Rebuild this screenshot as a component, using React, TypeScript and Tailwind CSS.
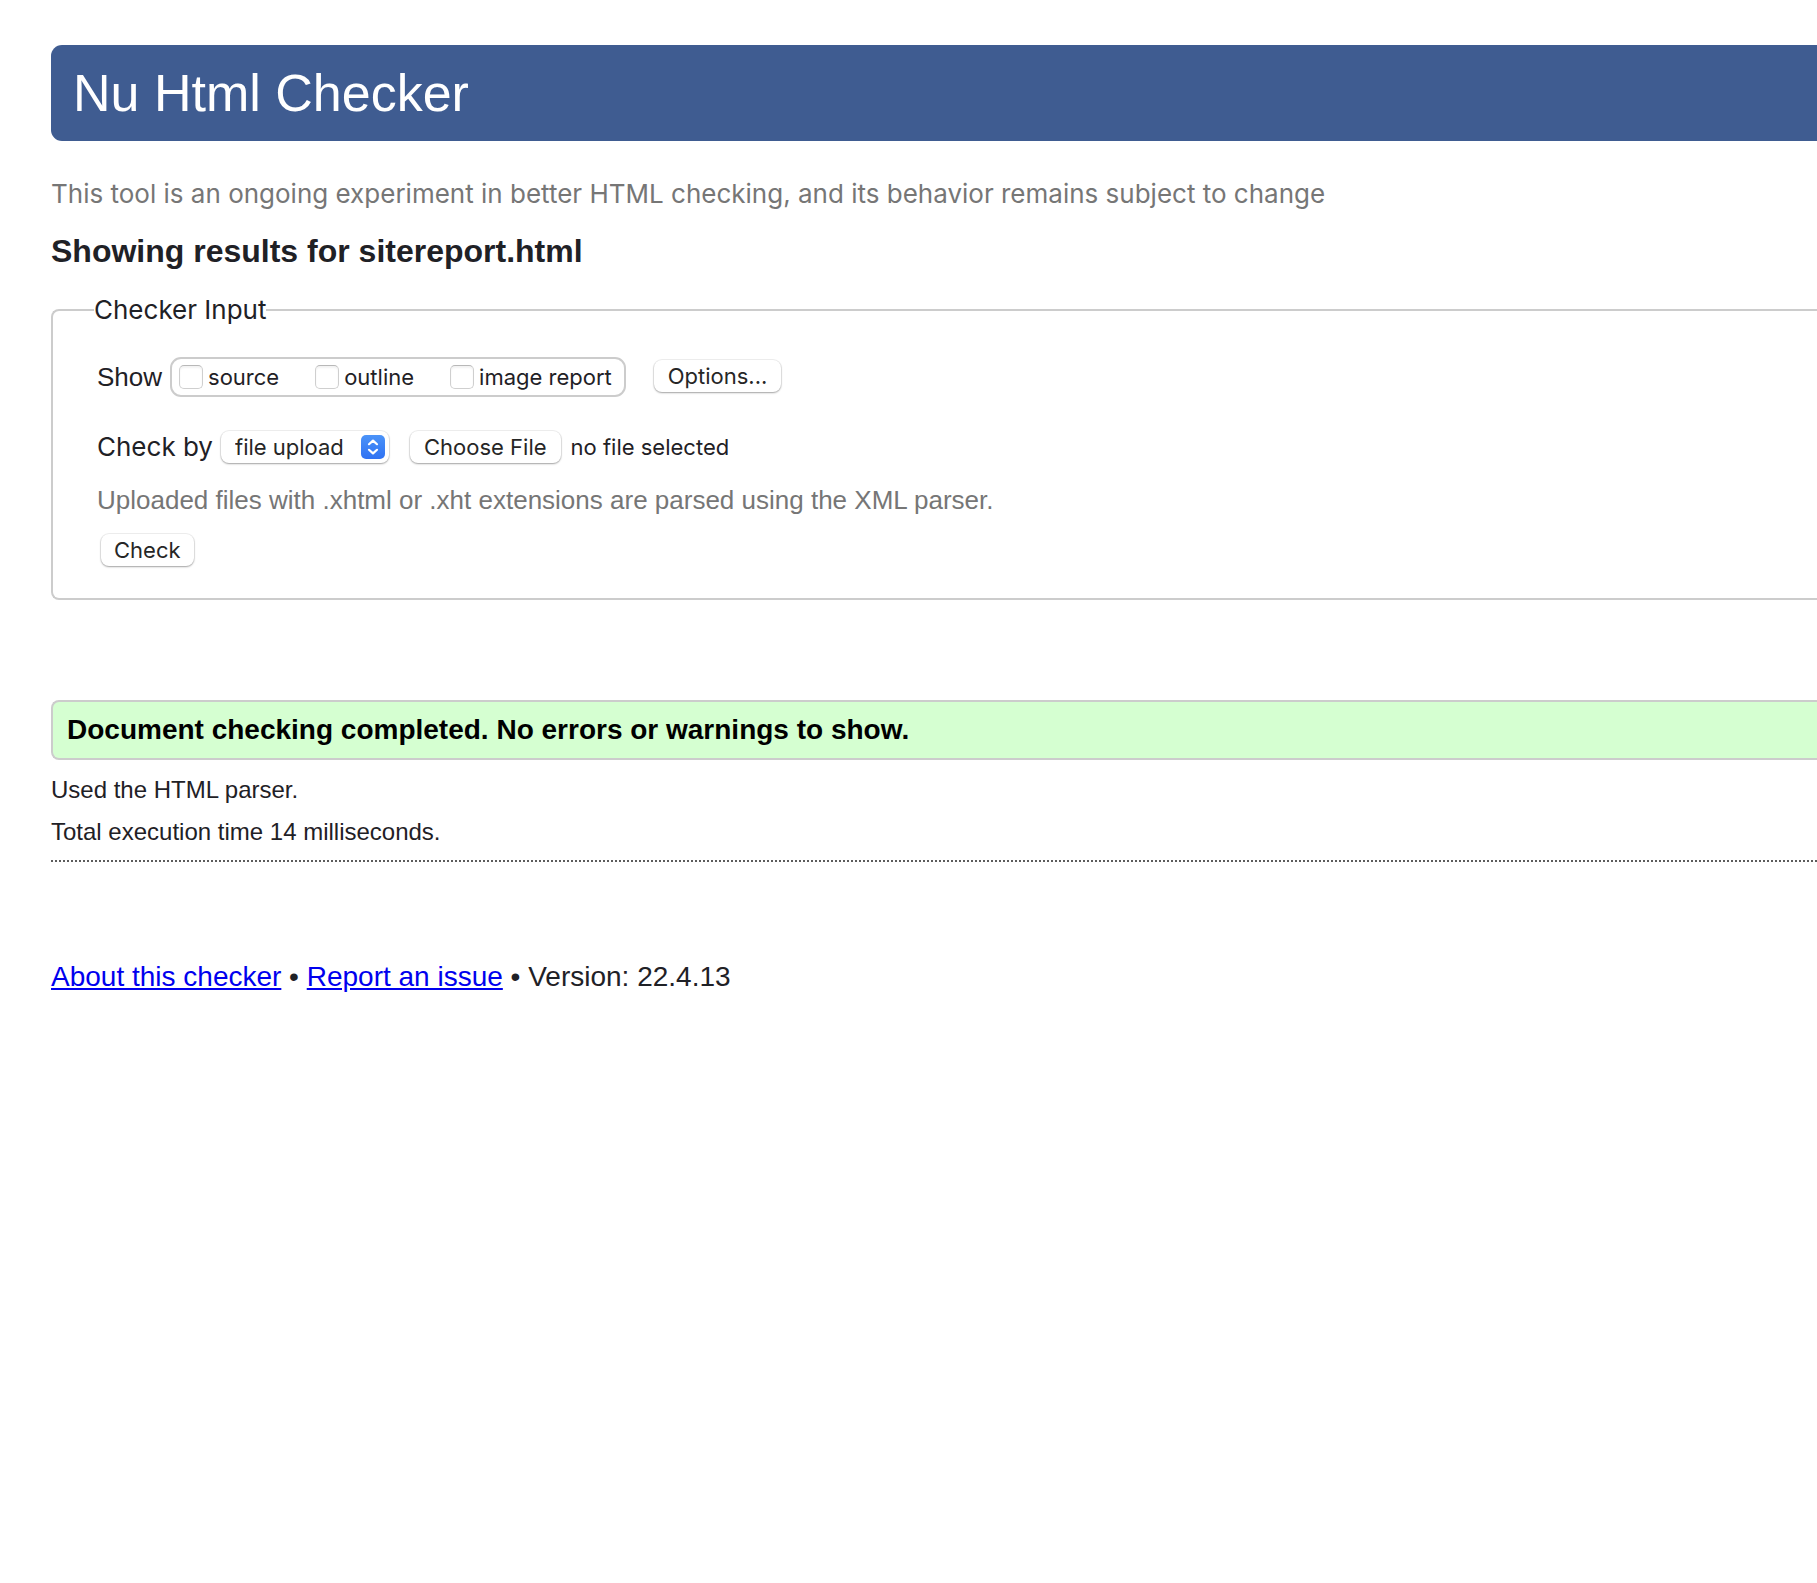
import { useState } from "react";

const sans = "font-['Liberation_Sans',Arial,sans-serif]";
const ui = "font-['Inter',sans-serif]";
const raised =
  "rounded-lg bg-white shadow-[0_0_0_1px_rgba(0,0,0,0.06),0_1px_2px_rgba(0,0,0,0.32)] text-[#262626] text-[22px] leading-[32px] font-['Inter',sans-serif]";

function Tick({ label }: { label: string }) {
  return (
    <label className="flex items-center gap-[5px]">
      <input
        type="checkbox"
        className="size-6 appearance-none rounded-[5px] border border-[#cfcfcf] border-t-[#b8b8b8] bg-white shadow-[inset_0_2px_2px_rgba(0,0,0,0.05)] checked:bg-blue-500"
      />
      {label}
    </label>
  );
}

export default function App() {
  const [file, setFile] = useState("no file selected");
  return (
    <div className={`min-h-screen bg-white pt-[45px] pl-[51px] text-[#1f2126] ${sans}`}>
      <header className="flex h-24 items-center rounded-l-[11px] bg-[#3f5c91] pl-[22px]">
        <h1 className="text-[52px] leading-[60px] text-white">Nu Html Checker</h1>
      </header>
      <p className={`mt-[35px] text-[26px] leading-9 text-[#767676] ${ui}`}>
        This tool is an ongoing experiment in better HTML checking, and its behavior remains subject to change
      </p>
      <h2 className="mt-[21px] text-[32px] leading-9 font-bold">Showing results for sitereport.html</h2>

      <form onSubmit={(e) => e.preventDefault()}>
        <fieldset className="mt-[26px] rounded-l-lg border-2 border-r-0 border-[#cccccc] pb-8 pl-[41px]">
          <legend className={`text-[26px] leading-[30px] ${ui}`}>Checker Input</legend>
          <div className="pl-[3px]">
            <div className="mt-8 flex items-center">
              <span className="text-[26px] leading-[30px]">Show</span>
              <div className={`ml-2 flex h-10 items-center gap-9 rounded-[11px] border-2 border-[#cccccc] pr-3 pl-[7px] text-[22px] ${ui}`}>
                <Tick label="source" />
                <Tick label="outline" />
                <Tick label="image report" />
              </div>
              <button type="button" className={`mb-[3px] ml-7 px-[14px] ${raised}`}>
                Options...
              </button>
            </div>

            <div className="mt-8 flex h-9 items-center">
              <label htmlFor="method" className={`text-[26px] leading-[30px] ${ui}`}>
                Check by
              </label>
              <div className="relative ml-2">
                <select id="method" className={`w-[168px] appearance-none pl-[14px] ${raised}`}>
                  <option>file upload</option>
                  <option>address</option>
                  <option>text input</option>
                </select>
                <svg viewBox="0 0 24 24" className="pointer-events-none absolute top-1 right-1 size-6" aria-hidden="true">
                  <defs>
                    <linearGradient id="knob" x1="0" y1="0" x2="0" y2="1">
                      <stop offset="0" stopColor="#4b93f8" />
                      <stop offset="1" stopColor="#2f72f3" />
                    </linearGradient>
                  </defs>
                  <rect width="24" height="24" rx="5" fill="url(#knob)" />
                  <path
                    d="M8 9.2 12 5.6 16 9.2M8 14.8 12 18.4 16 14.8"
                    fill="none"
                    stroke="white"
                    strokeWidth="2.2"
                    strokeLinecap="round"
                    strokeLinejoin="round"
                  />
                </svg>
              </div>
              <input
                id="upload"
                type="file"
                className="sr-only"
                onChange={(e) => setFile(e.target.files?.[0]?.name ?? "no file selected")}
              />
              <label htmlFor="upload" className={`ml-[21px] px-[14px] ${raised}`}>
                Choose File
              </label>
              <span className={`ml-[10px] text-[22px] leading-8 ${ui}`}>{file}</span>
            </div>

            <p className="mt-5 text-[26px] leading-[30px] text-[#767676]">
              Uploaded files with .xhtml or .xht extensions are parsed using the XML parser.
            </p>
            <button type="submit" className={`mt-[19px] ml-1 px-[13px] ${raised}`}>
              Check
            </button>
          </div>
        </fieldset>
      </form>

      <main className="mt-[100px]">
        <p className="flex h-[60px] items-center rounded-l-lg border-2 border-r-0 border-[#cccccc] bg-[#d5ffd1] pl-[14px] text-[28px] leading-8 font-bold text-black">
          Document checking completed. No errors or warnings to show.
        </p>
        <div className="border-b-2 border-dotted border-[#5c5c5c] pb-[14px] text-[24px] leading-7">
          <p className="mt-4">Used the HTML parser.</p>
          <p className="mt-[14px]">Total execution time 14 milliseconds.</p>
        </div>
      </main>

      <footer className="mt-[99px] text-[28px] leading-8">
        <a href="#about" className="text-[#0000ee] underline">About this checker</a>
        {" • "}
        <a href="#issues" className="text-[#0000ee] underline">Report an issue</a>
        {" • "}
        Version: 22.4.13
      </footer>
    </div>
  );
}
